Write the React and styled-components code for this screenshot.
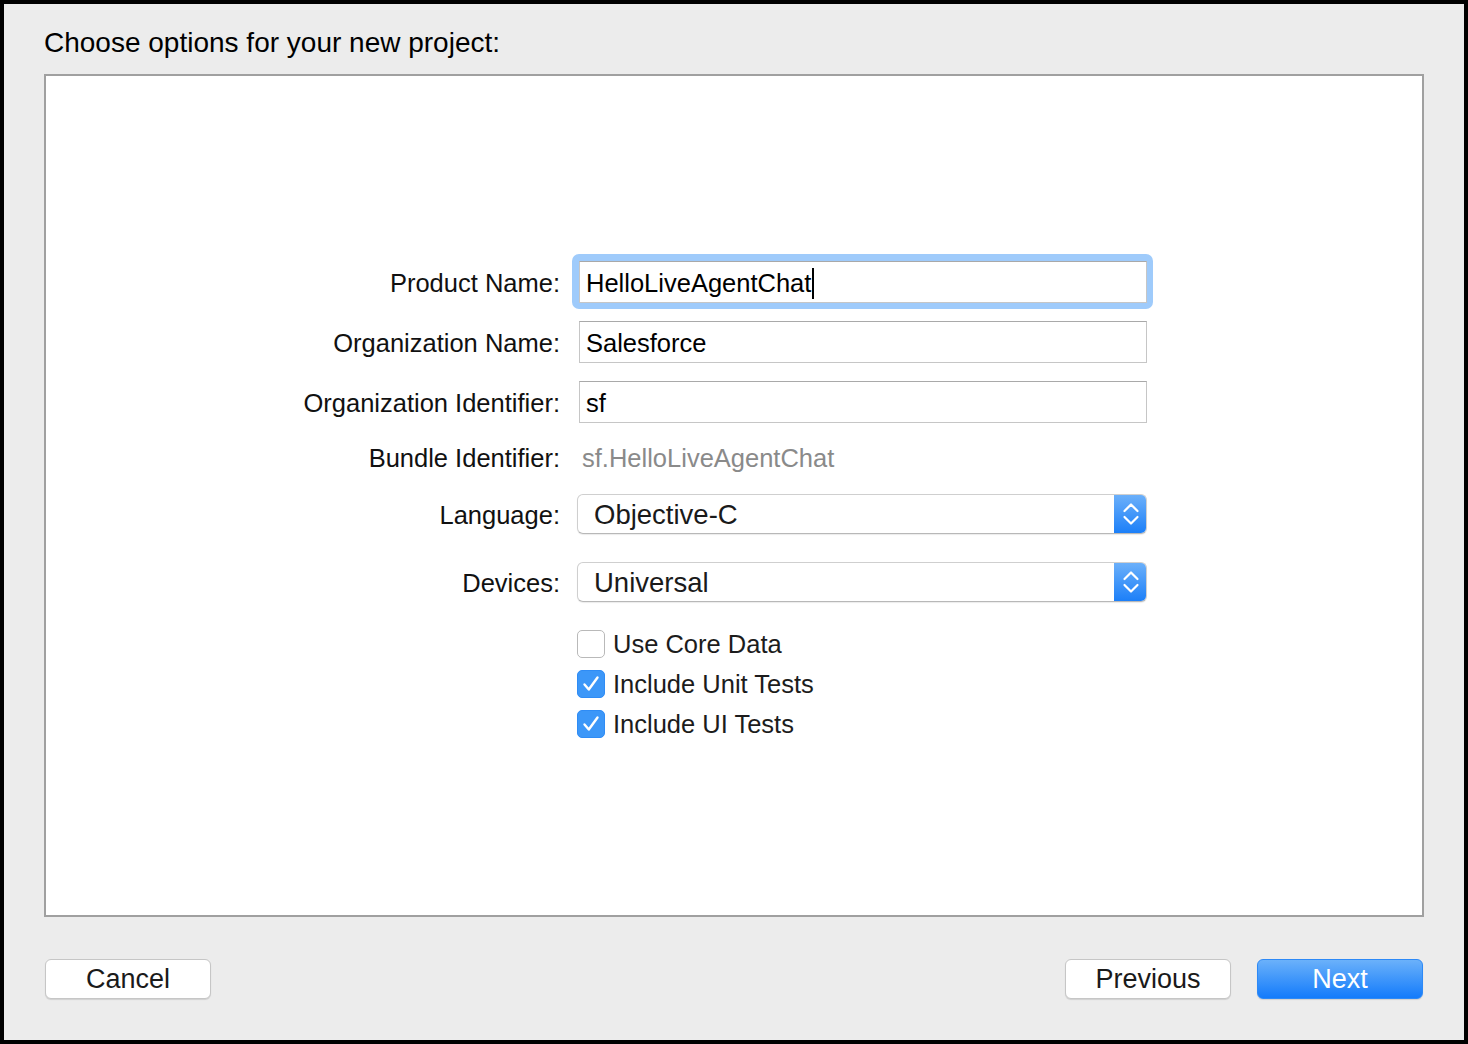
import React from 'react';
import styled, { createGlobalStyle } from 'styled-components';

const GlobalStyle = createGlobalStyle`
    html, body {
        margin: 0;
        padding: 0;
        background: #000;
    }
    body {
        font-family: "Liberation Sans", Arial, Helvetica, sans-serif;
        -webkit-font-smoothing: antialiased;
    }
`;

export default function App() {
    return (
        <>
            <GlobalStyle />
            <Window>
                <Title>Choose options for your new project:</Title>
                <Panel>
                    <Row>
                        <Label>Product Name:</Label>
                        <FocusRing>
                            <TextField $focused>
                                HelloLiveAgentChat<Caret />
                            </TextField>
                        </FocusRing>
                    </Row>
                    <Row $mt={18}>
                        <Label>Organization Name:</Label>
                        <TextField>Salesforce</TextField>
                    </Row>
                    <Row $mt={18}>
                        <Label>Organization Identifier:</Label>
                        <TextField>sf</TextField>
                    </Row>
                    <Row $mt={18}>
                        <Label>Bundle Identifier:</Label>
                        <StaticValue>sf.HelloLiveAgentChat</StaticValue>
                    </Row>
                    <Row $mt={21}>
                        <Label>Language:</Label>
                        <PopUp value="Objective-C" />
                    </Row>
                    <Row $mt={28}>
                        <Label>Devices:</Label>
                        <PopUp value="Universal" />
                    </Row>
                    <Row $mt={28}>
                        <span />
                        <Checkbox label="Use Core Data" />
                    </Row>
                    <Row $mt={12}>
                        <span />
                        <Checkbox label="Include Unit Tests" checked />
                    </Row>
                    <Row $mt={12}>
                        <span />
                        <Checkbox label="Include UI Tests" checked />
                    </Row>
                </Panel>
                <ButtonBar>
                    <Button>Cancel</Button>
                    <Spacer />
                    <Button>Previous</Button>
                    <Button $primary>Next</Button>
                </ButtonBar>
            </Window>
        </>
    );
}

function PopUp({ value }) {
    return (
        <PopUpBox>
            <PopUpValue>{value}</PopUpValue>
            <Stepper>
                <svg width="18" height="28" viewBox="0 0 18 28" fill="none">
                    <path d="M2.5 11 L9 4.5 L15.5 11" stroke="#fff" strokeWidth="2.2" strokeLinecap="round" strokeLinejoin="round" />
                    <path d="M2.5 17 L9 23.5 L15.5 17" stroke="#fff" strokeWidth="2.2" strokeLinecap="round" strokeLinejoin="round" />
                </svg>
            </Stepper>
        </PopUpBox>
    );
}

function Checkbox({ label, checked }) {
    return (
        <CheckRow>
            <Box $checked={checked}>
                {checked && (
                    <svg width="28" height="28" viewBox="0 0 28 28" fill="none">
                        <path d="M7.5 14.5 L11.8 19.5 L20.5 7.5" stroke="#fff" strokeWidth="2.4" strokeLinecap="round" strokeLinejoin="round" />
                    </svg>
                )}
            </Box>
            <CheckLabel>{label}</CheckLabel>
        </CheckRow>
    );
}

const Window = styled.div`
    margin: 4px;
    width: 1460px;
    height: 1036px;
    box-sizing: border-box;
    padding: 25px 40px 41px;
    background: #ececec;
    display: flex;
    flex-direction: column;
`;

const Title = styled.div`
    font-size: 28px;
    line-height: 28px;
    color: #000;
    margin-bottom: 17px;
`;

const Panel = styled.div`
    flex: 1;
    background: #fff;
    border: 2px solid #a0a0a0;
    box-sizing: border-box;
    padding-top: 185px;
    display: flex;
    flex-direction: column;
`;

const Row = styled.div`
    display: grid;
    grid-template-columns: 514px 570px;
    column-gap: 17px;
    align-items: center;
    margin-top: ${p => p.$mt || 0}px;
`;

const Label = styled.div`
    text-align: right;
    font-size: 25.5px;
    line-height: 30px;
    padding-top: 2px;
    color: #111;
`;

const FocusRing = styled.div`
    margin: -7px -6px -6px -5px;
    padding: 7px 6px 6px 7px;
    border-radius: 7px;
    background: #9fcbfb;
`;

const TextField = styled.div`
    margin-left: ${p => (p.$focused ? 0 : 2)}px;
    height: 42px;
    box-sizing: border-box;
    border: 1px solid #c6c6c6;
    border-top-color: #a9a9a9;
    background: #fff;
    padding: 2px 6px 0;
    display: flex;
    align-items: center;
    font-size: 25.5px;
    color: #000;
    white-space: nowrap;
`;

const Caret = styled.span`
    display: inline-block;
    width: 2px;
    height: 31px;
    background: #000;
    margin-left: 1px;
`;

const StaticValue = styled.div`
    padding: 2px 0 0 5px;
    font-size: 25.5px;
    line-height: 30px;
    color: #8a8a8a;
`;

const PopUpBox = styled.div`
    height: 40px;
    box-sizing: border-box;
    border: 1px solid #cfcfcf;
    border-bottom-color: #b8b8b8;
    border-radius: 6px;
    background: #fff;
    box-shadow: 0 1px 1px rgba(0, 0, 0, 0.08);
    display: flex;
    align-items: stretch;
    overflow: hidden;
`;

const PopUpValue = styled.div`
    flex: 1;
    padding: 2px 0 0 16px;
    display: flex;
    align-items: center;
    font-size: 27.5px;
    color: #1a1a1a;
`;

const Stepper = styled.div`
    width: 33px;
    margin: -1px -1px -1px 0;
    background: linear-gradient(#6db1fa, #1a7ef8);
    display: flex;
    align-items: center;
    justify-content: center;
`;

const CheckRow = styled.div`
    height: 28px;
    display: flex;
    align-items: center;
    gap: 8px;
`;

const Box = styled.div`
    width: 28px;
    height: 28px;
    box-sizing: border-box;
    border-radius: 5px;
    border: 1px solid ${p => (p.$checked ? '#2f8cf5' : '#b9b9b9')};
    background: ${p => (p.$checked ? '#3c97f8' : '#fff')};
    display: flex;
    align-items: center;
    justify-content: center;
    svg {
        margin: -1px;
    }
`;

const CheckLabel = styled.span`
    font-size: 25.5px;
    line-height: 28px;
    color: #1c1c1c;
`;

const ButtonBar = styled.div`
    margin-top: 42px;
    padding: 0 1px;
    display: flex;
    gap: 26px;
`;

const Spacer = styled.div`
    flex: 1;
`;

const Button = styled.button`
    width: 166px;
    height: 40px;
    box-sizing: border-box;
    border-radius: 6px;
    border: 1px solid ${p => (p.$primary ? '#2d89f6' : '#c6c6c6')};
    background: ${p => (p.$primary ? 'linear-gradient(#6bb1fa, #137bfb)' : '#fff')};
    color: ${p => (p.$primary ? '#fff' : '#1a1a1a')};
    box-shadow: 0 1px 1px rgba(0, 0, 0, 0.12);
    font-family: "Liberation Sans", Arial, sans-serif;
    font-size: 27px;
    padding: 0;
`;
